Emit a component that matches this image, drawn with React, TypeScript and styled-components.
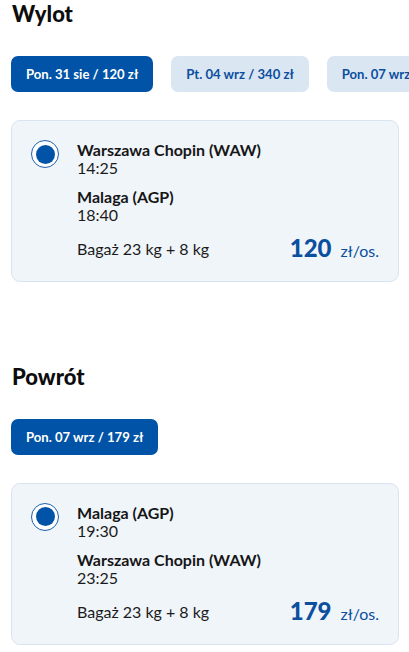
import React from "react";
import styled, { createGlobalStyle } from "styled-components";

const Global = createGlobalStyle`
  html, body { margin: 0; padding: 0; background: #ffffff; }
  body { font-family: Lato, "Noto Sans", sans-serif; color: #1b1b1b; }
  * { box-sizing: border-box; }
`;

const Page = styled.div`
  width: 409px;
  padding: 0 10px 0 11px;
  overflow: hidden;
`;

const Section = styled.section<{ $gapTop?: number }>`
  margin-top: ${(p) => p.$gapTop ?? 0}px;
`;

const Heading = styled.h2`
  margin: 0;
  padding-left: 1px;
  font-size: 22px;
  line-height: 28px;
  font-weight: 900;
  color: #0d0d0d;
`;

const ChipRow = styled.div`
  display: flex;
  gap: 18px;
  margin-top: 28px;
  margin-right: -10px;
  overflow: hidden;
`;

const Chip = styled.button<{ $active?: boolean }>`
  flex: none;
  height: 36px;
  padding: 0 15px;
  border: none;
  border-radius: 7px;
  display: flex;
  align-items: center;
  font-family: Lato, sans-serif;
  font-size: 13.1px;
  font-weight: 700;
  background: ${(p) => (p.$active ? "#0053a6" : "#dbe6f3")};
  color: ${(p) => (p.$active ? "#ffffff" : "#0b4f9e")};
`;

const Card = styled.div`
  margin-top: 28px;
  background: #f0f5fa;
  border: 1px solid #d9e4f0;
  border-radius: 9px;
  padding: 20px 19px 18px 19px;
  display: grid;
  grid-template-columns: 28px 1fr;
  column-gap: 18px;
`;

const Radio = styled.span`
  width: 28px;
  height: 28px;
  margin-top: -1px;
  border-radius: 50%;
  border: 1.5px solid #1f5fae;
  background: #ffffff;
  display: flex;
  align-items: center;
  justify-content: center;
  &::after {
    content: "";
    width: 19px;
    height: 19px;
    border-radius: 50%;
    background: #0053a6;
  }
`;

const Body = styled.div`
  display: flex;
  flex-direction: column;
`;

const Stop = styled.div`
  display: flex;
  flex-direction: column;
  & + & {
    margin-top: 11px;
  }
`;

const Place = styled.div`
  font-size: 16px;
  line-height: 18px;
  font-weight: 700;
  color: #161616;
`;

const Time = styled.div`
  font-size: 16px;
  line-height: 18px;
  font-weight: 400;
  color: #1b1b1b;
`;

const Footer = styled.div`
  margin-top: 10px;
  display: flex;
  align-items: center;
  justify-content: space-between;
`;

const Baggage = styled.span`
  font-size: 16px;
  line-height: 19px;
  color: #1b1b1b;
`;

const Price = styled.span`
  display: flex;
  align-items: baseline;
  gap: 9px;
  color: #0b4f9e;
`;

const Amount = styled.span`
  font-size: 24px;
  line-height: 1.2;
  font-weight: 900;
`;

const Unit = styled.span`
  font-size: 16px;
  font-weight: 400;
`;

type Flight = {
  from: string;
  dep: string;
  to: string;
  arr: string;
  price: number;
};

const FlightCard = ({ f }: { f: Flight }) => (
  <Card>
    <Radio />
    <Body>
      <Stop>
        <Place>{f.from}</Place>
        <Time>{f.dep}</Time>
      </Stop>
      <Stop>
        <Place>{f.to}</Place>
        <Time>{f.arr}</Time>
      </Stop>
      <Footer>
        <Baggage>Bagaż 23 kg + 8 kg</Baggage>
        <Price>
          <Amount>{f.price}</Amount>
          <Unit>zł/os.</Unit>
        </Price>
      </Footer>
    </Body>
  </Card>
);

export default function App() {
  return (
    <Page>
      <Global />
      <Section>
        <Heading>Wylot</Heading>
        <ChipRow>
          <Chip $active>Pon. 31 sie / 120 zł</Chip>
          <Chip>Pt. 04 wrz / 340 zł</Chip>
          <Chip>Pon. 07 wrz / 179 zł</Chip>
        </ChipRow>
        <FlightCard
          f={{
            from: "Warszawa Chopin (WAW)",
            dep: "14:25",
            to: "Malaga (AGP)",
            arr: "18:40",
            price: 120,
          }}
        />
      </Section>
      <Section $gapTop={81}>
        <Heading>Powrót</Heading>
        <ChipRow>
          <Chip $active>Pon. 07 wrz / 179 zł</Chip>
        </ChipRow>
        <FlightCard
          f={{
            from: "Malaga (AGP)",
            dep: "19:30",
            to: "Warszawa Chopin (WAW)",
            arr: "23:25",
            price: 179,
          }}
        />
      </Section>
    </Page>
  );
}
